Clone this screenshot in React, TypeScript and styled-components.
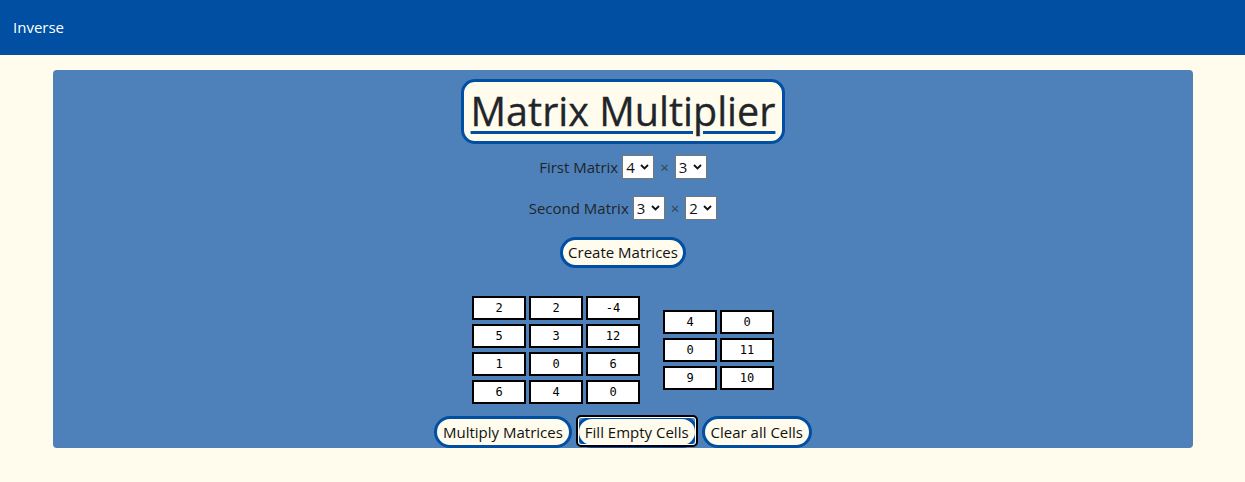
import React from "react";
import styled, { createGlobalStyle, css } from "styled-components";

const Global = createGlobalStyle`
  html, body { margin: 0; padding: 0; }
  body {
    background: #fffbed;
    font-family: "Open Sans", "Noto Sans", sans-serif;
    color: #212529;
  }
`;

const NavBar = styled.nav`
  height: 55px;
  box-sizing: border-box;
  padding: 0 0 2px 13px;
  background: #004fa3;
  display: flex;
  align-items: center;
  color: #ffffff;
  font-size: 15px;
`;

const Panel = styled.main`
  margin: 15px 52px 0 53px;
  background: #4e81ba;
  border-radius: 4px;
  padding-top: 9px;
  height: 369px;
  display: flex;
  flex-direction: column;
  align-items: center;
`;

const TitleBox = styled.div`
  border: 3px solid #004fa3;
  border-radius: 14px;
  background: #fffbed;
  height: 59px;
  padding: 0 7px 0 7px;
  display: flex;
  align-items: center;
`;

const Title = styled.h1`
  margin: 0;
  font-size: 39.5px;
  font-weight: 500;
  line-height: 1;
  text-decoration: underline;
  text-decoration-color: #004fa3;
  text-decoration-thickness: 3px;
  text-underline-offset: 5px;
  color: #212529;
  -webkit-text-stroke: 0.3px #212529;
`;

const SizeRow = styled.div<{ $top: number }>`
  margin-top: ${(p) => p.$top}px;
  display: flex;
  align-items: center;
  gap: 4px;
  font-size: 15px;
  height: 24px;
`;

const Times = styled.span`
  font-size: 15px;
  color: #33414f;
  margin: 0 2px;
`;

const SelectWrap = styled.span`
  position: relative;
  display: inline-block;
  width: 32px;
  height: 24px;
`;

const Select = styled.select`
  appearance: none;
  -webkit-appearance: none;
  width: 32px;
  height: 24px;
  border: 1px solid #767676;
  background: #ffffff;
  font-family: "Open Sans", "Noto Sans", sans-serif;
  font-size: 15px;
  padding: 0 0 0 3px;
  color: #111;
  border-radius: 0;
`;

const Chevron = styled.svg`
  position: absolute;
  right: 5px;
  top: 9px;
  width: 9px;
  height: 6px;
  pointer-events: none;
`;

const PillButton = styled.button<{ $focused?: boolean }>`
  position: relative;
  font-family: "Open Sans", "Noto Sans", sans-serif;
  font-size: 15px;
  color: #111;
  background: #fffbed;
  border: 3px solid #004fa3;
  border-radius: 16px;
  height: 32px;
  padding: 0 6px;
  line-height: 1;
  outline: none;
  ${(p) =>
    p.$focused &&
    css`
      &::after {
        content: "";
        position: absolute;
        inset: -4px -3px -2px -3px;
        border: 2px solid #000;
        border-radius: 5px;
        box-shadow: inset 0 0 0 1px #ffffff;
        pointer-events: none;
      }
    `}
`;

const CreateButton = styled(PillButton)`
  margin-top: 17px;
  height: 31px;
  padding: 0 5px;
`;

const MatricesArea = styled.div`
  margin-top: 28px;
  display: flex;
  align-items: center;
  gap: 23px;
`;

const Grid = styled.div<{ $cols: number }>`
  display: grid;
  grid-template-columns: repeat(${(p) => p.$cols}, 54px);
  gap: 4px 3px;
`;

const Cell = styled.input`
  box-sizing: border-box;
  width: 54px;
  height: 24px;
  border: 2px solid #000;
  background: #fff;
  font-family: "DejaVu Sans Mono", "Liberation Mono", monospace;
  font-size: 12px;
  text-align: center;
  color: #000;
  padding: 0;
`;

const ActionRow = styled.div`
  margin-top: 12px;
  display: flex;
  gap: 4px;
`;

const SizeSelect = ({ value }: { value: string }) => (
  <SelectWrap>
    <Select defaultValue={value}>
      {["1", "2", "3", "4", "5", "6"].map((v) => (
        <option key={v} value={v}>
          {v}
        </option>
      ))}
    </Select>
    <Chevron viewBox="0 0 9 6">
      <path d="M1 1 L4.5 4.5 L8 1" fill="none" stroke="#111" strokeWidth="1.8" />
    </Chevron>
  </SelectWrap>
);

const first = [
  ["2", "2", "-4"],
  ["5", "3", "12"],
  ["1", "0", "6"],
  ["6", "4", "0"],
];
const second = [
  ["4", "0"],
  ["0", "11"],
  ["9", "10"],
];

export default function App() {
  return (
    <>
      <Global />
      <NavBar>Inverse</NavBar>
      <Panel>
        <TitleBox>
          <Title>Matrix Multiplier</Title>
        </TitleBox>
        <SizeRow $top={11}>
          First Matrix <SizeSelect value="4" /> <Times>×</Times> <SizeSelect value="3" />
        </SizeRow>
        <SizeRow $top={17}>
          Second Matrix <SizeSelect value="3" /> <Times>×</Times> <SizeSelect value="2" />
        </SizeRow>
        <CreateButton>Create Matrices</CreateButton>
        <MatricesArea>
          <Grid $cols={3}>
            {first.flat().map((v, i) => (
              <Cell key={i} defaultValue={v} />
            ))}
          </Grid>
          <Grid $cols={2}>
            {second.flat().map((v, i) => (
              <Cell key={i} defaultValue={v} />
            ))}
          </Grid>
        </MatricesArea>
        <ActionRow>
          <PillButton>Multiply Matrices</PillButton>
          <PillButton $focused>Fill Empty Cells</PillButton>
          <PillButton>Clear all Cells</PillButton>
        </ActionRow>
      </Panel>
    </>
  );
}
